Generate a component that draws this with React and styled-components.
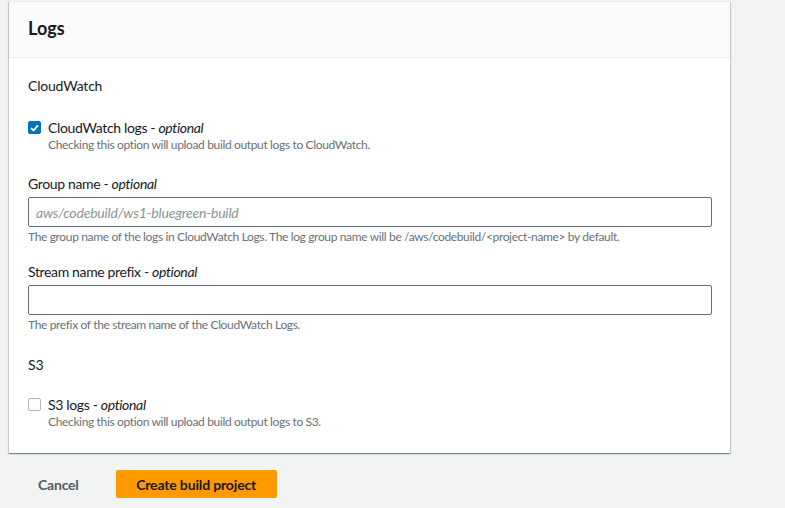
import React from "react";
import styled, { createGlobalStyle } from "styled-components";

const Global = createGlobalStyle`
  html, body { margin: 0; padding: 0; background: #f2f3f3; }
  body { font-family: Lato, "Noto Sans", sans-serif; color: #16191f; }
  * { box-sizing: border-box; }
`;

const Page = styled.div`
  padding: 1px 55px 0 9px;
  width: 785px;
`;

const Card = styled.section`
  background: #fff;
  border-top: 1px solid #eaeded;
  box-shadow: 0 1px 1px 0 rgba(0, 28, 36, 0.3), 1px 1px 1px 0 rgba(0, 28, 36, 0.15),
    -1px 1px 1px 0 rgba(0, 28, 36, 0.15);
`;

const Header = styled.header`
  background: #fafafa;
  border-bottom: 1px solid #eaeded;
  height: 56px;
  display: flex;
  align-items: center;
  padding: 0 19px 3px;
`;

const Title = styled.h2`
  margin: 0;
  font-size: 18px;
  font-weight: 700;
  line-height: 22px;
`;

const Body = styled.div`
  padding: 17px 19px 23px;
  display: flex;
  flex-direction: column;
`;

const SectionTitle = styled.h3`
  margin: 0;
  font-size: 14px;
  font-weight: 400;
  line-height: 22px;
  letter-spacing: -0.2px;
  margin-bottom: ${(p) => p.$mb}px;
`;

const CheckRow = styled.label`
  display: flex;
  gap: 7px;
  align-items: flex-start;
  margin-bottom: ${(p) => p.$mb || 0}px;
`;

const Box = styled.span`
  width: 13px;
  height: 13px;
  margin-top: 2px;
  border-radius: 2px;
  flex: none;
  display: flex;
  align-items: center;
  justify-content: center;
  background: ${(p) => (p.$checked ? "#0073bb" : "#fff")};
  border: 1px solid ${(p) => (p.$checked ? "#0073bb" : "#aab7b8")};
`;

const CheckText = styled.div`
  display: flex;
  flex-direction: column;
`;

const Label = styled.div`
  font-size: 14px;
  line-height: ${(p) => p.$lh || 20}px;
  letter-spacing: -0.35px;
  color: #16191f;
  em { font-style: italic; }
`;

const Desc = styled.div`
  font-size: 12px;
  line-height: 16px;
  letter-spacing: -0.35px;
  color: #687078;
`;

const Field = styled.div`
  display: flex;
  flex-direction: column;
  margin-bottom: ${(p) => p.$mb}px;
`;

const FieldLabel = styled(Label)`
  margin-bottom: 3px;
`;

const Input = styled.input`
  width: 684px;
  height: 30px;
  border: 1px solid #687078;
  border-radius: 2px;
  padding: 4px 7px;
  font-family: inherit;
  font-size: 14px;
  letter-spacing: -0.2px;
  color: #16191f;
  background: #fff;
  margin-bottom: 2px;
  &::placeholder {
    color: #879596;
    font-style: italic;
  }
`;

const Actions = styled.div`
  display: flex;
  align-items: center;
  gap: 37px;
  padding: 17px 0 0 29px;
`;

const LinkButton = styled.button`
  border: none;
  background: none;
  padding: 0;
  font-family: inherit;
  font-size: 14px;
  font-weight: 700;
  letter-spacing: -0.2px;
  color: #545b64;
`;

const PrimaryButton = styled.button`
  border: none;
  background: #ff9900;
  border-radius: 2px;
  height: 28px;
  width: 161px;
  padding: 0;
  font-family: inherit;
  font-size: 14px;
  font-weight: 700;
  letter-spacing: -0.15px;
  color: #16191f;
`;

const Check = ({ checked }) => (
  <Box $checked={checked}>
    {checked && (
      <svg width="9" height="8" viewBox="0 0 9 8">
        <path d="M1 4.2 L3.5 6.5 L8 1.3" fill="none" stroke="#fff" strokeWidth="1.8" />
      </svg>
    )}
  </Box>
);

export default function App() {
  return (
    <>
      <Global />
      <Page>
        <Card>
          <Header>
            <Title>Logs</Title>
          </Header>
          <Body>
            <SectionTitle $mb={22}>CloudWatch</SectionTitle>
            <CheckRow $mb={21}>
              <Check checked />
              <CheckText>
                <Label $lh={18}>
                  CloudWatch logs - <em>optional</em>
                </Label>
                <Desc>Checking this option will upload build output logs to CloudWatch.</Desc>
              </CheckText>
            </CheckRow>
            <Field $mb={17}>
              <FieldLabel>
                Group name - <em>optional</em>
              </FieldLabel>
              <Input placeholder="aws/codebuild/ws1-bluegreen-build" />
              <Desc>
                The group name of the logs in CloudWatch Logs. The log group name will be
                /aws/codebuild/&lt;project-name&gt; by default.
              </Desc>
            </Field>
            <Field $mb={21}>
              <FieldLabel>
                Stream name prefix - <em>optional</em>
              </FieldLabel>
              <Input />
              <Desc>The prefix of the stream name of the CloudWatch Logs.</Desc>
            </Field>
            <SectionTitle $mb={20}>S3</SectionTitle>
            <CheckRow>
              <Check />
              <CheckText>
                <Label $lh={18}>
                  S3 logs - <em>optional</em>
                </Label>
                <Desc>Checking this option will upload build output logs to S3.</Desc>
              </CheckText>
            </CheckRow>
          </Body>
        </Card>
        <Actions>
          <LinkButton>Cancel</LinkButton>
          <PrimaryButton>Create build project</PrimaryButton>
        </Actions>
      </Page>
    </>
  );
}
